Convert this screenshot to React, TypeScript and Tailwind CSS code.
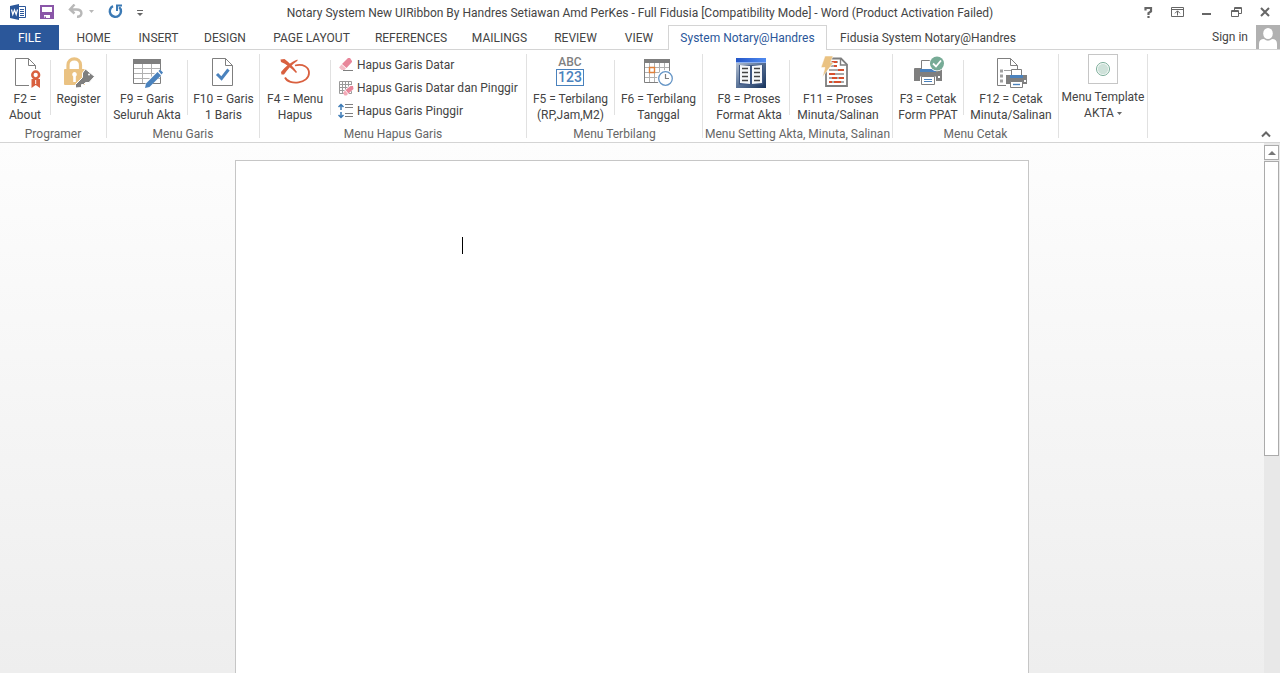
import { clsx } from "clsx";
import type { ReactNode } from "react";

const tabs = [
  { label: "HOME", width: "w-[65px]" },
  { label: "INSERT", width: "w-[65px]" },
  { label: "DESIGN", width: "w-[68px]" },
  { label: "PAGE LAYOUT", width: "w-[105px]" },
  { label: "REFERENCES", width: "w-[94px]" },
  { label: "MAILINGS", width: "w-[83px]" },
  { label: "REVIEW", width: "w-[69px]" },
  { label: "VIEW", width: "w-[58px]" },
  { label: "System Notary@Handres", width: "w-[159px]", active: true },
  { label: "Fidusia System Notary@Handres", width: "w-[202px]" },
];

export default function App() {
  return (
    <div className="h-screen flex flex-col overflow-hidden bg-white text-[#444444] text-xs font-['Roboto','Open_Sans',sans-serif]">
      <TitleBar />
      <TabBar />
      <Ribbon />
      <Workspace />
    </div>
  );
}

function TitleBar() {
  return (
    <header className="h-[25px] shrink-0 grid grid-cols-[1fr_auto_1fr] items-center">
      <div className="flex items-center pl-2">
        <BarButton label="Word">
          <WordIcon />
        </BarButton>
        <span className="w-2" />
        <BarButton label="Save">
          <SaveIcon />
        </BarButton>
        <span className="w-2" />
        <BarButton label="Undo">
          <UndoIcon />
        </BarButton>
        <span className="w-3" />
        <BarButton label="Repeat">
          <RepeatIcon />
        </BarButton>
        <span className="w-2" />
        <BarButton label="Customize Quick Access Toolbar">
          <CustomizeIcon />
        </BarButton>
      </div>
      <h1 className="whitespace-nowrap">
        Notary System New UIRibbon By Handres Setiawan Amd PerKes - Full Fidusia
        [Compatibility Mode] - Word (Product Activation Failed)
      </h1>
      <div className="flex items-center justify-end gap-[9px] pr-[5px]">
        <BarButton label="Help">
          <svg width="20" height="14" viewBox="0 0 20 14">
            <path
              d="M6.500 4.500V2H12V5.500L9.500 7V9"
              fill="none"
              stroke="#666"
              strokeWidth="2.200"
            />
            <path d="M8.400 10H10.600V12H8.400Z" fill="#666" />
          </svg>
        </BarButton>
        <BarButton label="Ribbon Display Options">
          <svg width="20" height="14" viewBox="0 0 20 14">
            <path
              d="M3.5 1.5H15.5V10.5H3.5ZM3.5 3.5H15.5M9.5 9.500V5M7 7.3L9.5 4.8L12 7.3"
              fill="none"
              stroke="#666"
            />
          </svg>
        </BarButton>
        <BarButton label="Minimize">
          <svg width="20" height="14" viewBox="0 0 20 14">
            <path d="M5 7H14V9H5Z" fill="#666" />
          </svg>
        </BarButton>
        <BarButton label="Restore">
          <svg width="20" height="14" viewBox="0 0 20 14">
            <path
              d="M8.5 4V1.5H15.5V7.5H13M5.5 4.5H12.5V10.5H5.5ZM8 2.5H16M5 5.5H13"
              fill="none"
              stroke="#666"
            />
          </svg>
        </BarButton>
        <BarButton label="Close">
          <svg width="20" height="14" viewBox="0 0 20 14">
            <path
              d="M6 2L14 10M14 2L6 10"
              fill="none"
              stroke="#666"
              strokeWidth="2"
            />
          </svg>
        </BarButton>
      </div>
    </header>
  );
}

function BarButton({ label, children }: { label: string; children: ReactNode }) {
  return (
    <button type="button" aria-label={label} className="shrink-0">
      {children}
    </button>
  );
}

function TabBar() {
  return (
    <nav className="h-[25px] shrink-0 flex">
      <button type="button" className="w-[59px] bg-[#2b579a] text-white">
        FILE
      </button>
      <span className="w-[2px] border-b border-[#d4d4d4]" />
      {tabs.map((tab) => (
        <button
          key={tab.label}
          type="button"
          className={clsx(
            "whitespace-nowrap border-[#d4d4d4] shrink-0",
            tab.width,
            tab.active ? "border border-b-0 text-[#2b579a]" : "border-b pt-px",
          )}
        >
          {tab.label}
        </button>
      ))}
      <div className="flex-1 flex justify-end border-b border-[#d4d4d4]">
        <button type="button" className="flex items-center gap-2">
          Sign in
          <svg width="24" height="24" viewBox="0 0 24 24">
            <rect width="24" height="24" fill="#b1b1b1" />
            <ellipse cx="12" cy="8.5" rx="4.8" ry="5.6" fill="#fff" />
            <path d="M3 24V19Q3 14 8 14Q12 17.5 16 14Q21 14 21 19V24Z" fill="#fff" />
          </svg>
        </button>
      </div>
    </nav>
  );
}

function Ribbon() {
  return (
    <section className="h-[93px] shrink-0 flex pt-1 border-b border-[#d4d4d4]">
      <Group name="Programer" width="w-[107px]">
        <BigButton width="w-[50px]" icon={<CertificateIcon />} lines={["F2 =", "About"]} />
        <Separator />
        <BigButton width="w-[55px]" icon={<LockKeyIcon />} lines={["Register"]} />
      </Group>
      <Group name="Menu Garis" width="w-[153px]">
        <BigButton width="w-[80px]" icon={<TablePenIcon />} lines={["F9 = Garis", "Seluruh Akta"]} />
        <Separator />
        <BigButton width="w-[71px]" icon={<PageCheckIcon />} lines={["F10 = Garis", "1 Baris"]} />
      </Group>
      <Group name="Menu Hapus Garis" width="w-[267px]">
        <BigButton width="w-[70px]" icon={<CrossLoopIcon />} lines={["F4 = Menu", "Hapus"]} />
        <Separator />
        <div className="w-[195px] pl-[7px] flex flex-col">
          <SmallButton icon={<EraserIcon />} label="Hapus Garis Datar" />
          <SmallButton icon={<GridEraserIcon />} label="Hapus Garis Datar dan Pinggir" />
          <SmallButton icon={<SpacingIcon />} label="Hapus Garis Pinggir" />
        </div>
      </Group>
      <Group name="Menu Terbilang" width="w-[176px]">
        <BigButton width="w-[87px]" icon={<AbcIcon />} lines={["F5 = Terbilang", "(RP,Jam,M2)"]} />
        <Separator />
        <BigButton width="w-[87px]" icon={<CalendarIcon />} lines={["F6 = Terbilang", "Tanggal"]} />
      </Group>
      <Group name="Menu Setting Akta, Minuta, Salinan" width="w-[190px]">
        <BigButton width="w-[80px]" icon={<BookIcon />} lines={["F8 = Proses", "Format Akta"]} />
        <Separator />
        <BigButton width="w-[96px]" icon={<BoltPageIcon />} lines={["F11 = Proses", "Minuta/Salinan"]} />
      </Group>
      <Group name="Menu Cetak" width="w-[166px]">
        <BigButton width="w-[70px]" icon={<PrinterCheckIcon />} lines={["F3 = Cetak", "Form PPAT"]} />
        <Separator />
        <BigButton width="w-[94px]" icon={<PagePrinterIcon />} lines={["F12 = Cetak", "Minuta/Salinan"]} />
      </Group>
      <div className="w-[89px] h-[84px] shrink-0 border-r border-[#e1e1e1]">
        <button type="button" className="w-full flex flex-col items-center leading-4 whitespace-nowrap">
          <span className="size-[30px] mb-[5px] border border-[#c6c6c6] flex items-center justify-center">
            <svg width="16" height="16" viewBox="0 0 16 16">
              <circle cx="8" cy="8" r="6.5" fill="#fff" stroke="#77ab96" />
              <circle cx="8" cy="8" r="5.2" fill="#cfe2da" />
            </svg>
          </span>
          <span>Menu Template</span>
          <span className="flex items-center gap-[3px]">
            AKTA
            <svg width="5" height="3" viewBox="0 0 5 3">
              <path d="M0 0H5L2.5 3Z" fill="#666" />
            </svg>
          </span>
        </button>
      </div>
      <div className="flex-1 flex items-end justify-end pr-2 pb-1">
        <button type="button" aria-label="Collapse the Ribbon">
          <svg width="12" height="8" viewBox="0 0 12 8">
            <path d="M2 6.5L6 2.5L10 6.5" fill="none" stroke="#666" strokeWidth="2" />
          </svg>
        </button>
      </div>
    </section>
  );
}

type GroupProps = {
  name: string;
  width: string;
  children: ReactNode;
};

function Group({ name, width, children }: GroupProps) {
  return (
    <div
      className={clsx(
        "h-[84px] shrink-0 flex flex-col items-center border-r border-[#e1e1e1]",
        width,
      )}
    >
      <div className="h-[72px] shrink-0 flex">{children}</div>
      <div className="leading-4 text-[#666666] whitespace-nowrap">{name}</div>
    </div>
  );
}

function Separator() {
  return <span className="w-px h-[55px] mt-[6px] bg-[#e1e1e1]" />;
}

type BigButtonProps = {
  width: string;
  icon: ReactNode;
  lines: string[];
};

function BigButton({ width, icon, lines }: BigButtonProps) {
  return (
    <button
      type="button"
      className={clsx(
        "shrink-0 flex flex-col items-center pt-[2px] leading-4 whitespace-nowrap",
        width,
      )}
    >
      <span className="mb-[3px] pr-px">{icon}</span>
      {lines.map((line) => (
        <span key={line}>{line}</span>
      ))}
    </button>
  );
}

function SmallButton({ icon, label }: { icon: ReactNode; label: string }) {
  return (
    <button type="button" className="h-[23px] pb-px flex items-center gap-[3px] whitespace-nowrap">
      {icon}
      {label}
    </button>
  );
}

function Workspace() {
  return (
    <main className="flex-1 min-h-0 flex bg-linear-to-b from-[#fdfdfd] to-[#eeeeee]">
      <div className="flex-1 flex justify-center pt-[17px]">
        <div className="w-[794px] border border-b-0 border-[#c6c6c6] bg-white pt-[76px] pl-[226px]">
          <div className="w-px h-[17px] bg-black" />
        </div>
      </div>
      <div className="w-4 pt-[2px] pr-px flex flex-col gap-px bg-[#e8e8e8]">
        <button
          type="button"
          aria-label="Scroll up"
          className="h-[15px] border border-[#ababab] bg-white flex items-center justify-center"
        >
          <svg width="8" height="4" viewBox="0 0 8 4">
            <path d="M0 4L4 0L8 4Z" fill="#777" />
          </svg>
        </button>
        <div className="h-[295px] border border-[#ababab] bg-white" />
      </div>
    </main>
  );
}

function WordIcon() {
  return (
    <svg width="20" height="18" viewBox="0 0 20 18">
      <path d="M9.5 2.5H17.5V13.5H9.5Z" fill="#fff" stroke="#2b579a" />
      <path d="M12 5.500H16M12 7.500H16M12 9.500H16M12 11.500H16" stroke="#2b579a" />
      <path d="M2 2L11 0V16L2 14Z" fill="#2b579a" />
      <path d="M3.5 5.5L4.8 10.5L6.5 6L8.2 10.5L9.5 5.5" fill="none" stroke="#fff" strokeWidth="1.2" />
    </svg>
  );
}

function SaveIcon() {
  return (
    <svg width="22" height="18" viewBox="0 0 22 18">
      <path d="M4 1H18V15H4Z" fill="#8a56a8" />
      <path d="M6 3H16V8H6Z" fill="#fff" />
      <path d="M8 11H14V14H10V12.5H8.5V14H8Z" fill="#fff" />
    </svg>
  );
}

function UndoIcon() {
  return (
    <svg width="28" height="18" viewBox="0 0 28 18">
      <path
        d="M4 5.500H10.500C17 5.500 17 13 11 12.800M8.500 .5L4 5.500L8.500 9.500"
        fill="none"
        stroke="#b8b8b8"
        strokeWidth="2.400"
      />
      <path d="M23 6H28L25.500 9Z" fill="#b8b8b8" />
    </svg>
  );
}

function RepeatIcon() {
  return (
    <svg width="20" height="18" viewBox="0 0 20 18">
      <path
        d="M7 2.200A5.600 5.600 0 1 0 13.200 3.200"
        fill="none"
        stroke="#3c7ab5"
        strokeWidth="2.400"
      />
      <path d="M11 7V1.500H16" fill="none" stroke="#3c7ab5" strokeWidth="2" />
    </svg>
  );
}

function CustomizeIcon() {
  return (
    <svg width="12" height="18" viewBox="0 0 12 18">
      <path d="M3 6.500H9" stroke="#666" />
      <path d="M3 9H9L6 12Z" fill="#666" />
    </svg>
  );
}

function CertificateIcon() {
  return (
    <svg width="32" height="32" viewBox="0 0 32 32">
      <path d="M20 29.500H6.500V2.500H19.500L26.500 9.500V13" fill="#fff" stroke="#7f7f7f" />
      <path d="M19.500 2.500V9.500H26.500" fill="none" stroke="#7f7f7f" />
      <path d="M22.500 23H31V32L26.700 29L22.500 32Z" fill="#d9603f" />
      <path d="M26.700 24V28" stroke="#fff" />
      <circle cx="26.700" cy="19" r="3.400" fill="#fff" stroke="#d9603f" strokeWidth="2.500" />
    </svg>
  );
}

function LockKeyIcon() {
  return (
    <svg width="32" height="32" viewBox="-1 0 32 32" className="overflow-visible">
      <path d="M5 14V9C5 .8 17.500 .8 17.500 9V14" fill="none" stroke="#eac282" strokeWidth="3.200" />
      <rect x="1" y="13" width="21" height="16" rx="1" fill="#eac282" />
      <path d="M11.500 16A2.500 2.500 0 0 1 12.800 20.500V26H10.200V20.500A2.500 2.500 0 0 1 11.500 16Z" fill="#fff" />
      <path
        d="M22.500 13L31.500 20.500L26 26.500H22.500L20.500 28.500H18.500V31.500L12.500 32V28.500L19.500 21.500V17Z"
        fill="#7f7f7f"
        stroke="#fff"
      />
      <circle cx="26" cy="18.500" r="1" fill="#fff" />
    </svg>
  );
}

function TablePenIcon() {
  return (
    <svg width="32" height="32" viewBox="0 0 32 32">
      <path d="M2.500 7V27.500H29.500V7" fill="#fff" stroke="#7f7f7f" />
      <path d="M3 12.500H29M3 17.500H29M3 22.500H29M11.500 8V27M20.500 8V27" stroke="#b1b1b1" />
      <path d="M2 3H30V8H2Z" fill="#7f7f7f" />
      <path d="M13 32L15 26L28 13L33 17L18 31Z" fill="#fff" />
      <path d="M14 32L15 27.500L26.500 16L30 19.500L18.500 31Z" fill="#4a82bd" />
      <path d="M27.500 15L29 13.500L32 16.500L30.500 18.500Z" fill="#4a82bd" />
    </svg>
  );
}

function PageCheckIcon() {
  return (
    <svg width="32" height="32" viewBox="0 0 32 32">
      <path d="M5.500 2.500H18.500L25.500 9.500V29.500H5.500Z" fill="#fff" stroke="#7f7f7f" />
      <path d="M18.500 2.500V9.500H25.500" fill="none" stroke="#7f7f7f" />
      <path d="M10 18L14.500 22.500L21.500 13.500" fill="none" stroke="#4a82bd" strokeWidth="3" />
    </svg>
  );
}

function CrossLoopIcon() {
  return (
    <svg width="32" height="32" viewBox="0 0 32 32">
      <path
        d="M16 9.500C24 7.500 30 11 30 17C30 27.500 10 30 6 21.500"
        fill="none"
        stroke="#d9603f"
        strokeWidth="1.800"
      />
      <path d="M1.500 3.500L5.500 3C9.500 6 14 10.500 18 16L17 17C12.500 12 7 8 2 6Z" fill="#d9603f" />
      <path d="M18.500 3.500C12 6 6 11 2 16L2.500 18.500H5C8.500 13.500 13 8.500 18.500 4.800Z" fill="#d9603f" />
    </svg>
  );
}

function EraserIcon() {
  return (
    <svg width="16" height="16" viewBox="0 0 16 16">
      <path d="M5 13.500H15" stroke="#7f7f7f" />
      <path d="M4 7L10 1H12L14 4V5L8.500 11Z" fill="#e8869a" />
      <path d="M3.500 7.500L8 11.500L6.500 13H3.500L1 10.500Z" fill="#f3bcc6" />
    </svg>
  );
}

function GridEraserIcon() {
  return (
    <svg width="16" height="16" viewBox="0 0 16 16">
      <path d="M1.500 1.500H13.500V13.500H1.500ZM4.500 1V14M7.500 1V14M10.500 1V14M1 4.500H14M1 7.500H14M1 10.500H14" fill="none" stroke="#9a9a9a" />
      <path d="M5 12L12 5H16V9L8 16Z" fill="#fff" />
      <path d="M7.500 10L12.500 6H15L15.500 9L10.500 13.500Z" fill="#e8869a" />
      <path d="M7 10.500L10 14L8.500 15.500H6.500L5 13Z" fill="#f3a9b6" />
    </svg>
  );
}

function SpacingIcon() {
  return (
    <svg width="16" height="16" viewBox="0 0 16 16">
      <path d="M7 1.500H15M7 4.500H15M7 10.500H15M7 13.500H15" stroke="#7f7f7f" />
      <path d="M.5 4L3 1.500L5.500 4M3 2V7M.5 12L3 14.500L5.500 12M3 14V9" fill="none" stroke="#3c7ab5" strokeWidth="1.500" />
    </svg>
  );
}

function AbcIcon() {
  return (
    <span className="size-8 flex flex-col items-center font-medium">
      <span className="leading-[13px] text-[#7f7f7f]">ABC</span>
      <span className="w-7 h-[17px] leading-[15px] text-center text-sm border border-[#4a82bd] text-[#4a82bd]">
        123
      </span>
    </span>
  );
}

function CalendarIcon() {
  return (
    <svg width="32" height="32" viewBox="0 0 32 32">
      <path d="M2.500 7V26.500H27.500V7" fill="#fff" stroke="#7f7f7f" />
      <path d="M7.500 7V26M12.500 7V26M17.500 7V26M22.500 7V26M3 11.500H27M3 16.500H27M3 21.500H27" stroke="#b1b1b1" />
      <path d="M2 3H28V7H2Z" fill="#7f7f7f" />
      <path d="M7.500 11.500H12.500V16.500H7.500Z" fill="#fff" stroke="#e0803a" strokeWidth="1.400" />
      <circle cx="23.500" cy="22.500" r="8.500" fill="#fff" />
      <circle cx="23.500" cy="22.500" r="6.800" fill="#fff" stroke="#6595c6" strokeWidth="1.300" />
      <path d="M23.500 18V22.500H27" fill="none" stroke="#7f7f7f" strokeWidth="1.200" />
    </svg>
  );
}

function BookIcon() {
  return (
    <svg width="32" height="32" viewBox="-1 0 32 32" className="overflow-visible">
      <defs>
        <linearGradient id="bookFrame" x1="0" y1="0" x2="1" y2="1">
          <stop offset="0" stopColor="#c3cedd" />
          <stop offset=".5" stopColor="#5b7499" />
          <stop offset="1" stopColor="#17335c" />
        </linearGradient>
        <linearGradient id="bookBar">
          <stop offset="0" stopColor="#2456c8" />
          <stop offset="1" stopColor="#4f8af0" />
        </linearGradient>
      </defs>
      <path d="M2 2H32V32H2Z" fill="url(#bookFrame)" />
      <path d="M2 2H32V7H2Z" fill="url(#bookBar)" />
      <path d="M2 6.500H32" stroke="#8db0f0" />
      <path d="M5 9H29V28.500H5Z" fill="#3c5580" />
      <path d="M6 9L16 10V28L6 27ZM18 10L28 9V27L18 28Z" fill="#f6f8fa" />
      <path d="M8 12.500H14M8 16.500H14M8 20.500H14M8 24.500H14M20 12.500H26M20 16.500H26M20 20.500H26M20 24.500H26" stroke="#444" strokeWidth="1.400" />
    </svg>
  );
}

function BoltPageIcon() {
  return (
    <svg width="32" height="32" viewBox="0 0 32 32" className="overflow-visible">
      <path d="M4 2.500H19L25 8.500V30H4Z" fill="#fff" stroke="#7f7f7f" strokeWidth="1.800" />
      <path d="M18.500 2.500V9H25" fill="none" stroke="#7f7f7f" strokeWidth="1.400" />
      <path d="M7 6H16M7 10H15M7 14H22M7 18H22M7 22H22M7 26H22" stroke="#a9a9a9" strokeWidth="2" />
      <path d="M10 6H15M12 10H15M16 14H22M7 18H13M10 22H15M17 22H22M7 26H10M12 26H19" stroke="#d6502e" strokeWidth="2" />
      <path d="M3 0H11L8.500 6.500H11.500L.5 21L3 11.500H-1Z" fill="#eac282" stroke="#fff" strokeWidth=".5" />
    </svg>
  );
}

function PrinterCheckIcon() {
  return (
    <svg width="32" height="32" viewBox="0 0 32 32">
      <path d="M2 13Q2 12 3 12H29Q30 12 30 13V25H2Z" fill="#7f7f7f" />
      <path d="M9.500 15V4.500H22.500V15" fill="#fff" stroke="#7f7f7f" />
      <path d="M8 13H24V16H8Z" fill="#4a82bd" />
      <path d="M8 20.500H24V29H8Z" fill="#fff" />
      <path d="M9.500 20.500H22.500V28.500H9.500Z" fill="#fff" stroke="#7f7f7f" />
      <path d="M12 23.500H20M12 25.500H20" stroke="#4a82bd" strokeWidth="1.200" />
      <path d="M26 20H28V22H26Z" fill="#fff" />
      <circle cx="25" cy="7.500" r="7.800" fill="#fff" />
      <circle cx="25" cy="7.500" r="7" fill="#77ab96" />
      <path d="M21 7.500L24 10.500L29 4.500" fill="none" stroke="#fff" strokeWidth="1.800" />
    </svg>
  );
}

function PagePrinterIcon() {
  return (
    <svg width="32" height="32" viewBox="0 0 32 32">
      <path d="M11 29.500H2.500V2.500H15.500L22.500 9.500V13" fill="#fff" stroke="#7f7f7f" />
      <path d="M15.500 2.500V9.500H22.500" fill="none" stroke="#7f7f7f" />
      <path d="M5 13.500H8V16.500H5ZM5 18.500H8V21.500H5ZM5 23.500H8V26.500H5Z" fill="#a0a0a0" />
      <path d="M9 14.500H16" stroke="#a0a0a0" />
      <path d="M11 19H32V28H11Z" fill="#7f7f7f" />
      <path d="M16.500 20V13.500H26.500V20" fill="#fff" stroke="#7f7f7f" />
      <path d="M15 19H28V22H15Z" fill="#4a82bd" />
      <path d="M15.500 25.500H27.500V31.500H15.500Z" fill="#fff" stroke="#7f7f7f" />
      <path d="M18 28.500H25" stroke="#4a82bd" strokeWidth="1.400" />
      <path d="M29 24H31V26H29Z" fill="#fff" />
    </svg>
  );
}
